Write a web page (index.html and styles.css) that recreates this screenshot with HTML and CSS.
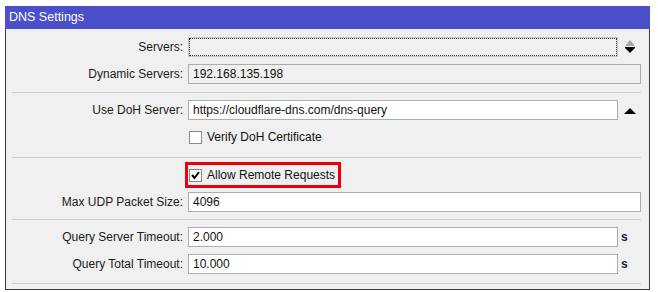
FILE: index.html
```html
<!DOCTYPE html>
<html lang="en">
<head>
    <meta charset="UTF-8">
    <title>DNS Settings</title>
    <link rel="stylesheet" href="styles.css">
</head>
<body>
    <div class="window">
        <div class="titlebar">DNS Settings</div>
        <div class="content">
            <div class="group g1">
                <div class="row">
                    <span class="lbl">Servers:</span>
                    <div class="field focus"></div>
                    <div class="addon arrows">
                        <svg width="12" height="20" viewBox="0 0 12 20">
                            <polygon points="1,9 6,3 11,9" fill="#a6a6a6"/>
                            <polygon points="1,10 11,10 11,11 6,16 1,11" fill="#000"/>
                        </svg>
                    </div>
                </div>
                <div class="row">
                    <span class="lbl">Dynamic Servers:</span>
                    <div class="field readonly">192.168.135.198</div>
                </div>
            </div>
            <div class="sep"></div>

            <div class="group g2">
                <div class="row">
                    <span class="lbl">Use DoH Server:</span>
                    <div class="field">https://cloudflare-dns.com/dns-query</div>
                    <div class="addon arrows">
                        <svg width="12" height="20" viewBox="0 0 12 20">
                            <polygon points="0,14 6,8 12,14" fill="#000"/>
                        </svg>
                    </div>
                </div>
                <div class="row">
                    <span class="lbl"></span>
                    <span class="check"></span>
                    <span class="check-text">Verify DoH Certificate</span>
                </div>
            </div>
            <div class="sep"></div>

            <div class="group g3">
                <div class="row">
                    <span class="lbl"></span>
                    <span class="highlight">
                        <span class="check checked">
                            <svg width="11" height="11" viewBox="0 0 11 11">
                                <polyline points="2,5 4.5,8 9,2" fill="none" stroke="#000" stroke-width="2"/>
                            </svg>
                        </span>
                        <span class="check-text">Allow Remote Requests</span>
                    </span>
                </div>
                <div class="row">
                    <span class="lbl">Max UDP Packet Size:</span>
                    <div class="field">4096</div>
                </div>
            </div>
            <div class="sep"></div>

            <div class="group g4">
                <div class="row">
                    <span class="lbl">Query Server Timeout:</span>
                    <div class="field">2.000</div>
                    <div class="addon unit">s</div>
                </div>
                <div class="row">
                    <span class="lbl">Query Total Timeout:</span>
                    <div class="field">10.000</div>
                    <div class="addon unit">s</div>
                </div>
            </div>
            <div class="sep"></div>
            <div class="tail"></div>
        </div>
    </div>
</body>
</html>
```

FILE: styles.css
```css
body { margin: 0; background: #fff; font-family: "Liberation Sans", Arial, sans-serif; font-size: 12px; color: #111; }
.window { margin: 6px 0 0 5px; width: 645px; box-sizing: border-box; border: 1px solid #3c3c3c; border-top: 0; background: #f0f0f0; }
.titlebar { height: 23px; line-height: 23px; margin: 0 -1px; padding-left: 4px; background: #4b4fca; color: #fff; font-size: 12.5px; }
.content { padding-right: 8px; }
.group { display: flex; flex-direction: column; gap: 7px; }
.g1 { padding: 8px 0 8px; }
.g2 { padding: 7px 0 10px; }
.g3 { padding: 7px 0 7px; }
.g4 { padding: 7px 0 9px; }
.sep { height: 1px; margin-left: 6px; background: #cfcfcf; }
.tail { height: 5px; }
.row { display: flex; align-items: center; height: 20px; gap: 5px; }
.lbl { width: 177px; flex: none; text-align: right; color: #1a1a1a; }
.field { flex: 1; height: 20px; box-sizing: border-box; border: 1px solid #adadad; background: #fff; padding-left: 4px; line-height: 18px; white-space: nowrap; }
.field.readonly { background: #f0f0f0; }
.field.focus { background: #f0f0f0; border-color: #c4c4c4; outline: 1px dotted #333; outline-offset: -2px; }
.addon { width: 23px; flex: none; margin-left: -5px; height: 20px; }
.arrows { display: flex; justify-content: center; }
.unit { padding-left: 3px; box-sizing: border-box; line-height: 20px; font-weight: bold; color: #1c1c3a; }
.check { width: 13px; height: 13px; box-sizing: border-box; border: 1px solid #8a8a8a; background: #fff; margin-left: 1px; display: flex; align-items: center; justify-content: center; flex: none; }
.check-text { margin-left: 0; }
.highlight { display: flex; align-items: center; gap: 5px; height: 20px; padding-right: 3px; outline: 3px solid #e8000b; outline-offset: 0; }
.highlight .check { margin-left: 1px; }
```
